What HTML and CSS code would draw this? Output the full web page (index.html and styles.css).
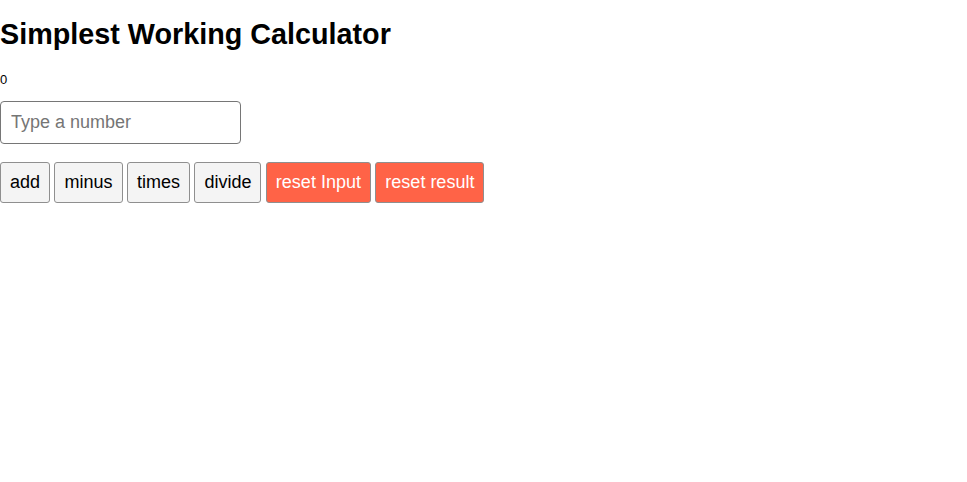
FILE: index.html
```html
<!DOCTYPE html>
<html>
<head>
<meta charset="utf-8">
<link rel="stylesheet" href="styles.css">
</head>
<body>
<div class="app">
  <h1 class="title">Simplest Working Calculator</h1>
  <p class="result">0</p>
  <form class="calc">
    <input class="num" type="number" placeholder="Type a number">
    <div class="buttons">
      <button type="button" class="btn">add</button>
      <button type="button" class="btn">minus</button>
      <button type="button" class="btn">times</button>
      <button type="button" class="btn">divide</button>
      <button type="button" class="btn btn-red">reset Input</button>
      <button type="button" class="btn btn-red">reset result</button>
    </div>
  </form>
</div>
</body>
</html>
```

FILE: styles.css
```css
html, body {
  margin: 0;
  padding: 0;
  background: #fff;
}
body {
  font-family: "Liberation Sans", Arial, sans-serif;
  color: #000;
}
.title {
  font-size: 28.75px;
  font-weight: bold;
  margin: 16px 0 0 0;
  line-height: 36px;
}
.result {
  font-size: 13px;
  line-height: 15px;
  margin: 20px 0 0 0;
}
.calc {
  margin: 14px 0 0 0;
}
.num {
  display: block;
  box-sizing: border-box;
  width: 241px;
  height: 43px;
  padding: 0 10px;
  font-family: "Liberation Sans", Arial, sans-serif;
  font-size: 18px;
  border: 1px solid #767676;
  border-radius: 4px;
  background: #fff;
  margin: 0;
  outline: none;
}
.num::placeholder {
  color: #757575;
}
.buttons {
  display: flex;
  gap: 4.45px;
  margin-top: 18px;
}
.btn {
  box-sizing: border-box;
  height: 41px;
  padding: 0 9px;
  font-family: "Liberation Sans", Arial, sans-serif;
  font-size: 18px;
  color: #000;
  background: #f4f4f4;
  border: 1px solid #8f8f8f;
  border-radius: 3px;
  margin: 0;
}
.btn-red {
  background: #ff6347;
  color: #fff;
  border-color: #8f8f8f;
}
```
